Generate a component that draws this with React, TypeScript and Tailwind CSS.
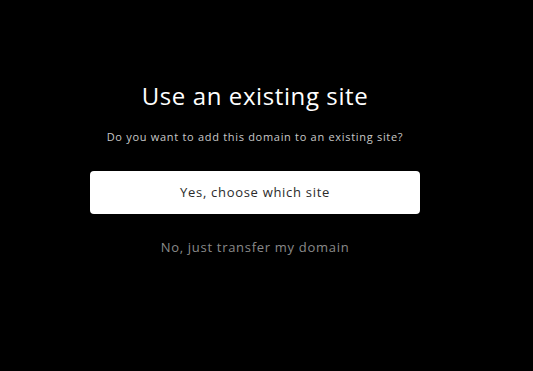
import React from 'react';

const App: React.FC = () => {
  return (
    <div className="w-[533px] h-[371px] bg-black font-['Open_Sans',sans-serif] overflow-hidden">
      <div className="w-[510px] flex flex-col items-center pt-[80px]">
        <h1 className="text-white text-[24px] leading-[32px] font-normal tracking-[0.6px]">Use an existing site</h1>
        <p className="mt-[18px] text-[#c8c8c8] text-[11px] leading-[14px] tracking-[0.7px]">
          Do you want to add this domain to an existing site?
        </p>
        <button className="mt-[27px] w-[330px] h-[43px] bg-white rounded-[4px] text-[#2b2b2b] text-[13px] tracking-[0.7px]">
          Yes, choose which site
        </button>
        <button className="mt-[24px] text-[#8a8a8a] text-[13px] leading-[18px] tracking-[0.7px]">
          No, just transfer my domain
        </button>
      </div>
    </div>
  );
};

export default App;
